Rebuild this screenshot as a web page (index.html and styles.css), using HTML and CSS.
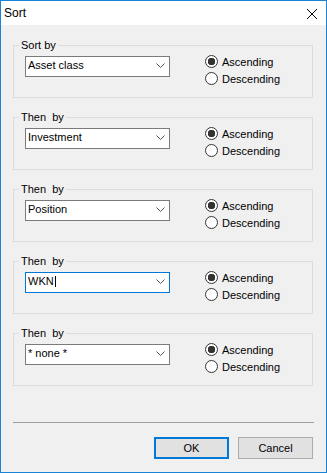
FILE: index.html
```html
<!DOCTYPE html>
<html lang="en">
<head>
	<meta charset="UTF-8">
	<meta name="viewport" content="width=device-width, initial-scale=1.0">
	<title>Sort</title>
	<link rel="stylesheet" href="styles.css">
</head>
<body>
	<div class="window">
		<div class="titlebar">
			<span class="title">Sort</span>
			<svg class="close" width="10" height="10" viewBox="0 0 10 10">
				<path d="M0 0 L10 10 M10 0 L0 10" stroke="#000" stroke-width="1" fill="none"/>
			</svg>
		</div>

		<div class="client">
			<fieldset class="group">
				<legend>Sort by</legend>
				<div class="row">
					<div class="combo">
						<span class="value">Asset class</span>
						<svg class="chevron" width="9" height="5" viewBox="0 0 9 5"><path d="M0.5 0.5 L4.5 4.5 L8.5 0.5" stroke="#555" fill="none"/></svg>
					</div>
					<div class="radios">
						<div class="option"><span class="radio checked"></span>Ascending</div>
						<div class="option"><span class="radio"></span>Descending</div>
					</div>
				</div>
			</fieldset>

			<fieldset class="group">
				<legend>Then&nbsp; by</legend>
				<div class="row">
					<div class="combo">
						<span class="value">Investment</span>
						<svg class="chevron" width="9" height="5" viewBox="0 0 9 5"><path d="M0.5 0.5 L4.5 4.5 L8.5 0.5" stroke="#555" fill="none"/></svg>
					</div>
					<div class="radios">
						<div class="option"><span class="radio checked"></span>Ascending</div>
						<div class="option"><span class="radio"></span>Descending</div>
					</div>
				</div>
			</fieldset>

			<fieldset class="group">
				<legend>Then&nbsp; by</legend>
				<div class="row">
					<div class="combo">
						<span class="value">Position</span>
						<svg class="chevron" width="9" height="5" viewBox="0 0 9 5"><path d="M0.5 0.5 L4.5 4.5 L8.5 0.5" stroke="#555" fill="none"/></svg>
					</div>
					<div class="radios">
						<div class="option"><span class="radio checked"></span>Ascending</div>
						<div class="option"><span class="radio"></span>Descending</div>
					</div>
				</div>
			</fieldset>

			<fieldset class="group">
				<legend>Then&nbsp; by</legend>
				<div class="row">
					<div class="combo focused">
						<span class="value">WKN<span class="caret"></span></span>
						<svg class="chevron" width="9" height="5" viewBox="0 0 9 5"><path d="M0.5 0.5 L4.5 4.5 L8.5 0.5" stroke="#555" fill="none"/></svg>
					</div>
					<div class="radios">
						<div class="option"><span class="radio checked"></span>Ascending</div>
						<div class="option"><span class="radio"></span>Descending</div>
					</div>
				</div>
			</fieldset>

			<fieldset class="group last">
				<legend>Then&nbsp; by</legend>
				<div class="row">
					<div class="combo">
						<span class="value">* none *</span>
						<svg class="chevron" width="9" height="5" viewBox="0 0 9 5"><path d="M0.5 0.5 L4.5 4.5 L8.5 0.5" stroke="#555" fill="none"/></svg>
					</div>
					<div class="radios">
						<div class="option"><span class="radio checked"></span>Ascending</div>
						<div class="option"><span class="radio"></span>Descending</div>
					</div>
				</div>
			</fieldset>

			<div class="separator"></div>

			<div class="buttons">
				<button type="button" class="btn default">OK</button>
				<button type="button" class="btn">Cancel</button>
			</div>
		</div>
	</div>
</body>
</html>
```

FILE: styles.css
```css
html,
body {
	margin: 0;
	padding: 0;
}

body {
	font-family: "Liberation Sans", Arial, sans-serif;
	font-size: 11px;
	color: #000;
	background-color: #f0f0f0;
}

.window {
	width: 327px;
	height: 473px;
	box-sizing: border-box;
	border: 1px solid #1883d7;
	background-color: #f0f0f0;
	display: flex;
	flex-direction: column;
}

.titlebar {
	height: 24px;
	background-color: #fff;
	display: flex;
	align-items: center;
	justify-content: space-between;
}

.title {
	padding-left: 3px;
	font-size: 12px;
	line-height: 24px;
}

.close {
	margin-right: 9px;
	margin-top: 2px;
}

.client {
	flex: 1;
	padding-top: 14px;
}

.group {
	margin: 0 0 13px 12px;
	padding: 0;
	width: 300px;
	box-sizing: border-box;
	border: 1px solid #dcdcdc;
	min-inline-size: 0;
}

.group.last {
	margin-bottom: 0;
}

.group legend {
	margin-left: 5px;
	padding: 0 2px;
	line-height: 13px;
}

.row {
	height: 45px;
	display: flex;
	align-items: flex-start;
}

.combo {
	margin: 4px 0 0 11px;
	width: 145px;
	height: 21px;
	box-sizing: border-box;
	border: 1px solid #7a7a7a;
	background-color: #fff;
	display: flex;
	align-items: flex-start;
	justify-content: space-between;
}

.combo.focused {
	border-color: #0078d7;
}

.value {
	padding-left: 2px;
	line-height: 17px;
	white-space: nowrap;
}

.caret {
	display: inline-block;
	width: 1px;
	height: 11px;
	background-color: #000;
	vertical-align: -2px;
	margin-left: 1px;
}

.chevron {
	margin: 6px 4px 0 0;
}

.radios {
	margin-left: 35px;
	padding-top: 1px;
}

.option {
	height: 17px;
	display: flex;
	align-items: center;
	white-space: nowrap;
}

.radio {
	width: 13px;
	height: 13px;
	box-sizing: border-box;
	border: 1px solid #333;
	border-radius: 50%;
	background-color: #fff;
	margin-right: 4px;
}

.radio.checked {
	background: radial-gradient(circle, #333 3.5px, #fff 4px);
}

.separator {
	margin: 36px 0 0 12px;
	width: 301px;
	height: 1px;
	background-color: #a0a0a0;
}

.buttons {
	margin: 14px 13px 0 0;
	display: flex;
	justify-content: flex-end;
	gap: 9px;
}

.btn {
	width: 75px;
	height: 22px;
	padding: 0;
	box-sizing: border-box;
	border: 1px solid #adadad;
	background-color: #e1e1e1;
	font-family: "Liberation Sans", Arial, sans-serif;
	font-size: 11px;
	color: #000;
}

.btn.default {
	border: 2px solid #0078d7;
}
```
